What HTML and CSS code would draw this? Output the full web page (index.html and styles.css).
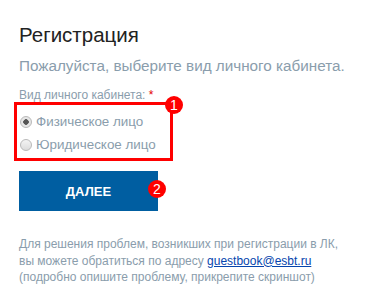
FILE: index.html
```html
<!DOCTYPE html>
<html lang="ru">
<head>
  <meta charset="UTF-8">
  <title>Регистрация</title>
  <link rel="stylesheet" href="styles.css">
</head>
<body>
  <div class="container">
    <h1>Регистрация</h1>
    <p class="lead">Пожалуйста, выберите вид личного кабинета.</p>

    <div class="field-label">Вид личного кабинета: <span class="req">*</span></div>
    <div class="choice">
      <label class="option">
        <input type="radio" name="kind" value="person" checked> Физическое лицо
      </label>
      <label class="option">
        <input type="radio" name="kind" value="company"> Юридическое лицо
      </label>
      <span class="badge badge-one">1</span>
    </div>

    <div class="actions">
      <button class="next">ДАЛЕЕ</button>
      <span class="badge badge-two">2</span>
    </div>

    <p class="help">
      Для решения проблем, возникших при регистрации в ЛК,<br>
      вы можете обратиться по адресу <a href="#">guestbook@esbt.ru</a><br>
      (подробно опишите проблему, прикрепите скриншот)
    </p>
  </div>
</body>
</html>
```

FILE: styles.css
```css
:root {
  --muted: #8a9dac;
  --primary: #005ea1;
  --mark: #ff0000;
}

body {
  margin: 0;
  background: #ffffff;
  font-family: "Liberation Sans", Arial, sans-serif;
  color: #222222;
}

.container {
  padding: 23px 0 0 19px;
}

h1 {
  margin: 0;
  font-size: 20.5px;
  font-weight: normal;
  line-height: 23px;
  color: #222222;
}

.lead {
  margin: 11px 0 0;
  font-size: 15.25px;
  line-height: 17px;
  color: var(--muted);
}

.field-label {
  margin-top: 14px;
  font-size: 12px;
  line-height: 14px;
  color: var(--muted);
}

.req {
  color: #e30000;
}

.choice {
  position: relative;
  width: 150px;
  margin: 0 0 0 -5px;
  padding: 5px 0 2px 3px;
  border: 3px solid var(--mark);
}

.option {
  display: flex;
  align-items: center;
  gap: 4px;
  font-size: 13.4px;
  line-height: 23px;
  color: var(--muted);
}

.option input {
  appearance: none;
  width: 12px;
  height: 12px;
  margin: 0;
  border: 1px solid #b9b9b9;
  border-radius: 50%;
  background: linear-gradient(#f4f4f4, #dcdcdc);
  box-sizing: border-box;
}

.option input:checked {
  background: radial-gradient(circle, #555555 0 2.5px, #e6e6e6 3px);
}

.badge {
  position: absolute;
  width: 18px;
  height: 18px;
  border-radius: 50%;
  background: var(--mark);
  color: #ffffff;
  font-size: 14px;
  line-height: 18px;
  text-align: center;
}

.badge-one {
  top: -9px;
  left: 148px;
}

.actions {
  position: relative;
  margin-top: 10px;
  width: 139px;
}

.next {
  display: block;
  width: 139px;
  height: 40px;
  padding: 0;
  border: none;
  background: var(--primary);
  color: #ffffff;
  font-family: inherit;
  font-size: 13px;
  font-weight: bold;
}

.badge-two {
  top: 9px;
  left: 129px;
}

.help {
  margin: 25px 0 0;
  font-size: 12px;
  line-height: 16.5px;
  color: var(--muted);
}

.help a {
  color: #0645ad;
}
```
